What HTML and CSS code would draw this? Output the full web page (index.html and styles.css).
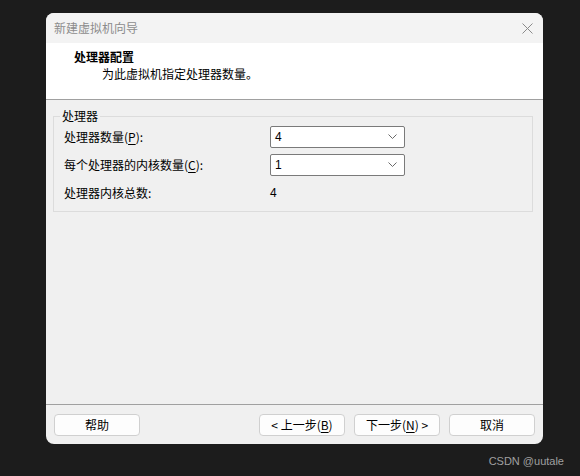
FILE: index.html
```html
<!DOCTYPE html>
<html lang="zh">
<head>
<meta charset="utf-8">
<link rel="stylesheet" href="styles.css">
</head>
<body>
<div class="window">
  <div class="titlebar">
    <span class="title">新建虚拟机向导</span>
    <svg class="close" width="11" height="11" viewBox="0 0 11 11"><path d="M0.5 0.5L10.5 10.5M10.5 0.5L0.5 10.5" stroke="#8a8a8a" stroke-width="1" fill="none"/></svg>
  </div>
  <div class="header">
    <div class="h-title">处理器配置</div>
    <div class="h-sub">为此虚拟机指定处理器数量。</div>
  </div>
  <div class="body">
    <fieldset class="group">
      <legend>处理器</legend>
      <div class="grid">
        <div class="label">处理器数量(<u>P</u>):</div>
        <div class="select"><span>4</span><svg width="9" height="6" viewBox="0 0 9 6"><path d="M0.5 0.5L4.5 4.5L8.5 0.5" stroke="#6a6a6a" fill="none"/></svg></div>
        <div class="label">每个处理器的内核数量(<u>C</u>):</div>
        <div class="select"><span>1</span><svg width="9" height="6" viewBox="0 0 9 6"><path d="M0.5 0.5L4.5 4.5L8.5 0.5" stroke="#6a6a6a" fill="none"/></svg></div>
        <div class="label">处理器内核总数:</div>
        <div class="value">4</div>
      </div>
    </fieldset>
  </div>
  <div class="footer">
    <button class="btn">帮助</button>
    <span class="spacer"></span>
    <button class="btn">&lt; 上一步(<u>B</u>)</button>
    <button class="btn">下一步(<u>N</u>) &gt;</button>
    <button class="btn">取消</button>
  </div>
</div>
<div class="watermark">CSDN @uutale</div>
</body>
</html>
```
FILE: styles.css
```css
html, body {
  margin: 0;
  padding: 0;
  background: #1c1c1c;
  width: 580px;
  height: 476px;
  overflow: hidden;
  font-family: "Noto Sans CJK SC", "Liberation Sans", sans-serif;
  font-size: 12px;
}
.window {
  margin: 13px 0 0 46px;
  width: 497px;
  height: 431px;
  border-radius: 8px;
  overflow: hidden;
  background: #f0f0f0;
  display: flex;
  flex-direction: column;
}
.titlebar {
  height: 30px;
  flex: none;
  background: #f3f3f3;
  display: flex;
  align-items: center;
  justify-content: space-between;
  padding: 0 10px 0 8px;
  box-sizing: border-box;
}
.title {
  color: #8c8c8c;
  line-height: 16px;
  margin-top: 0px;
}
.close { margin-right: 0; }
.header {
  height: 56px;
  flex: none;
  background: #fff;
  border-bottom: 1px solid #a0a0a0;
  padding: 6px 0 0 28px;
  box-sizing: content-box;
  box-sizing: border-box;
  height: 57px;
}
.h-title {
  font-weight: bold;
  color: #000;
  line-height: 16px;
}
.h-sub {
  margin: 1px 0 0 28px;
  color: #000;
  line-height: 16px;
}
.body {
  flex: 1;
  padding: 8px 10px 0 7px;
}
.group {
  margin: 0;
  border: 1px solid #dcdcdc;
  padding: 2px 10px 7px 10px;
}
.group legend {
  margin-left: -4px;
  padding: 0 2px;
  line-height: 16px;
  color: #000;
}
.grid {
  display: grid;
  grid-template-columns: 206px 135px;
  grid-auto-rows: 22px;
  row-gap: 6px;
  align-items: center;
}
.label {
  color: #000;
  line-height: 16px;
}
.label u, .btn u { text-decoration-thickness: 1px; text-underline-offset: 2px; }
.select {
  height: 22px;
  box-sizing: border-box;
  border: 1px solid #7a7a7a;
  border-radius: 2px;
  background: #fff;
  display: flex;
  align-items: center;
  justify-content: space-between;
  padding: 0 7px 0 4px;
  color: #000;
  font-family: "Liberation Sans", sans-serif;
  font-size: 12px;
}
.value {
  color: #000;
  font-family: "Liberation Sans", sans-serif;
  padding-left: 0;
}
.footer {
  flex: none;
  height: 40px;
  box-sizing: border-box;
  border-top: 1px solid #a0a0a0;
  display: flex;
  align-items: flex-start;
  padding: 9px 8px 0 8px;
  gap: 9px;
}
.spacer { flex: 1; }
.btn {
  width: 86px;
  height: 22px;
  margin: 0;
  padding: 0;
  border: 1px solid #d0d0d0;
  border-radius: 4px;
  background: #fdfdfd;
  font-family: "Noto Sans CJK SC", "Liberation Sans", sans-serif;
  font-size: 12px;
  color: #000;
  line-height: 16px;
}
.watermark {
  text-align: right;
  padding: 11px 16px 0 0;
  color: #a0a0a0;
  font-family: "Liberation Sans", sans-serif;
  font-size: 11px;
  line-height: 12px;
}
```
